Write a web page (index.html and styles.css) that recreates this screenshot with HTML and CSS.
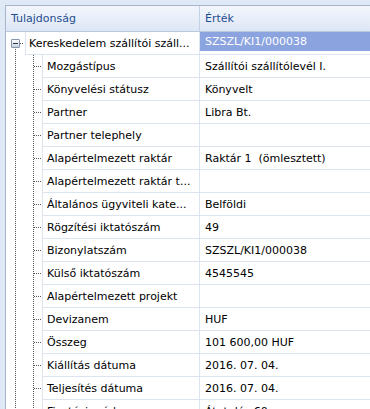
FILE: index.html
```html
<!DOCTYPE html>
<html lang="hu">
<head>
<meta charset="utf-8">
<title>Tulajdonságok</title>
<link rel="stylesheet" href="styles.css">
</head>
<body>
<div class="panel">
  <div class="header">
    <div class="hcell hname">Tulajdonság</div>
    <div class="hcell hval">Érték</div>
  </div>
  <div class="rows">
    <div class="row root">
      <div class="indent"><span class="toggle"><span class="minus"></span></span></div>
      <div class="label">Kereskedelem szállítói száll...</div>
      <div class="value"><span class="sel">SZSZL/KI1/000038</span></div>
    </div>
    <div class="row"><div class="indent"></div><div class="label">Mozgástípus</div><div class="value">Szállítói szállítólevél I.</div></div>
    <div class="row"><div class="indent"></div><div class="label">Könyvelési státusz</div><div class="value">Könyvelt</div></div>
    <div class="row"><div class="indent"></div><div class="label">Partner</div><div class="value">Libra Bt.</div></div>
    <div class="row"><div class="indent"></div><div class="label">Partner telephely</div><div class="value"></div></div>
    <div class="row"><div class="indent"></div><div class="label">Alapértelmezett raktár</div><div class="value">Raktár 1  (ömlesztett)</div></div>
    <div class="row"><div class="indent"></div><div class="label">Alapértelmezett raktár t...</div><div class="value"></div></div>
    <div class="row"><div class="indent"></div><div class="label">Általános ügyviteli kate...</div><div class="value">Belföldi</div></div>
    <div class="row"><div class="indent"></div><div class="label">Rögzítési iktatószám</div><div class="value">49</div></div>
    <div class="row"><div class="indent"></div><div class="label">Bizonylatszám</div><div class="value">SZSZL/KI1/000038</div></div>
    <div class="row"><div class="indent"></div><div class="label">Külső iktatószám</div><div class="value">4545545</div></div>
    <div class="row"><div class="indent"></div><div class="label">Alapértelmezett projekt</div><div class="value"></div></div>
    <div class="row"><div class="indent"></div><div class="label">Devizanem</div><div class="value">HUF</div></div>
    <div class="row"><div class="indent"></div><div class="label">Összeg</div><div class="value">101 600,00 HUF</div></div>
    <div class="row"><div class="indent"></div><div class="label">Kiállítás dátuma</div><div class="value">2016. 07. 04.</div></div>
    <div class="row"><div class="indent"></div><div class="label">Teljesítés dátuma</div><div class="value">2016. 07. 04.</div></div>
    <div class="row"><div class="indent"></div><div class="label">Fizetési mód</div><div class="value">Átutalás 60 nap</div></div>
  </div>
</div>
</body>
</html>
```

FILE: styles.css
```css
html, body {
  margin: 0;
  padding: 0;
  overflow: hidden;
  height: 100%;
}
body {
  background: #dfe8f5;
  font-family: "DejaVu Sans", Verdana, sans-serif;
  font-size: 11px;
  color: #000;
}
.panel {
  margin: 5px -2px 0 5px;
  border: 1px solid #a7b6ca;
  background: #fff;
}
.header {
  display: flex;
  height: 25px;
  border-bottom: 1px solid #b9c9de;
  background: linear-gradient(to bottom, #f2f6fc 0%, #e6edf8 60%, #dde6f4 100%);
}
.hcell {
  display: flex;
  align-items: center;
  color: #1f4d8f;
  padding-left: 5px;
  box-sizing: border-box;
}
.hname { width: 193px; }
.hval { flex: 1; border-left: 1px solid #c3d1e4; }

.rows {
  background-color: #fff;
  background-image:
    repeating-linear-gradient(to bottom, #555 0 1px, transparent 1px 2px),
    repeating-linear-gradient(to bottom, #555 0 1px, transparent 1px 2px);
  background-size: 1px 100%, 1px 100%;
  background-position: 9px 15px, 27px 23px;
  background-repeat: no-repeat;
}
.row {
  display: flex;
  height: 23px;
  --ind: 36px;
}
.row.root { --ind: 19px; }
.indent {
  flex: 0 0 var(--ind);
  display: flex;
  align-items: center;
  background-image: repeating-linear-gradient(to right, #555 0 1px, transparent 1px 2px);
  background-size: 8px 1px;
  background-position: 28px 11px;
  background-repeat: no-repeat;
}
.root .indent {
  background-size: 4px 1px;
  background-position: 14px 11px;
}
.toggle {
  margin-left: 5px;
  width: 9px;
  height: 9px;
  box-sizing: border-box;
  border: 1px solid #8493a8;
  border-radius: 1px;
  background: linear-gradient(to bottom, #fafbfd, #c8d2df);
  display: flex;
  align-items: center;
  justify-content: center;
}
.minus {
  width: 5px;
  height: 1px;
  background: #2b3a52;
}
.label, .value {
  box-sizing: border-box;
  border-bottom: 1px solid #dce4ef;
  border-left: 1px solid #dce4ef;
  display: flex;
  align-items: center;
  white-space: pre;
  overflow: hidden;
  background: #fff;
}
.label {
  width: calc(193px - var(--ind));
  padding-left: 4px;
}
.root .label { padding-left: 3px; }
.value {
  flex: 1;
  min-width: 0;
}
.row:not(.root) .value { padding-left: 5px; }
.sel {
  align-self: flex-start;
  height: 19px;
  width: 100%;
  display: flex;
  align-items: center;
  padding-left: 5px;
  background: #8ba3df;
  color: #fff;
}
```
